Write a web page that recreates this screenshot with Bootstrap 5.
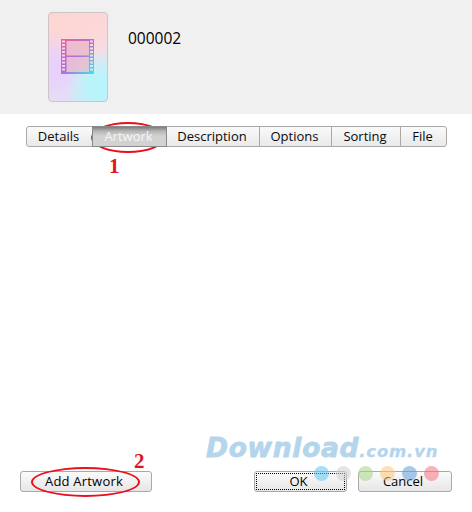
<!DOCTYPE html>
<html lang="en">
<head>
  <meta charset="UTF-8" />
  <meta name="viewport" content="width=device-width, initial-scale=1" />
  <title>Artwork</title>
  <link href="https://cdn.jsdelivr.net/npm/bootstrap@5.3.2/dist/css/bootstrap.min.css" rel="stylesheet">
  <style>
    html, body { height: 100%; overflow: hidden; }
    body {
      font-family: "Open Sans", "Liberation Sans", sans-serif;
      background: #fff;
      color: #000;
    }
    .app-page { height: 512px; width: 472px; position: relative; }
    .info-head {
      height: 114px;
      background: #f0f0f0;
      padding: 12px 0 0 48px;
      gap: 20px;
    }
    .thumb {
      width: 60px;
      height: 90px;
      border: 1px solid #cdc4c8;
      border-radius: 4px;
      background:
        radial-gradient(circle 36px at 90% 85%, #b6f6fb 0, rgba(182,246,251,.85) 40%, rgba(182,246,251,0) 100%),
        radial-gradient(circle 38px at 5% 65%, #e6d0fe 0, rgba(230,208,254,.8) 45%, rgba(230,208,254,0) 100%),
        linear-gradient(150deg, #fdd6ce 0, #fcd8dc 45%, #e6e6ee 68%, #d9dcfa 100%);
    }
    .clip-name { font-size: 15.5px; line-height: 20px; padding-top: 16px; }
    .tab-strip { margin: 12px 25px 0 26px; display: flex; height: 21px; }
    .tab-strip .btn {
      --bs-btn-border-radius: 3px;
      flex: none;
      padding: 0 2px 0 0;
      height: 21px;
      font-size: 13px;
      line-height: 19px;
      color: #0a0a0a;
      border: 1px solid #a9a9a9;
      background: linear-gradient(#fafafa, #e9e9e9);
    }
    .tab-strip .btn + .btn { margin-left: -1px; }
    .tab-strip .btn.active {
      color: #f6f6f6;
      background: linear-gradient(#7d7d7d 0, #b5b5b5 4px, #d2d2d2 9px, #d2d2d2 100%);
      border-color: #8a8a8a;
    }
    .w-details { width: 67px; }
    .w-artwork { width: 75px; }
    .w-description { width: 94px; }
    .w-options { width: 73px; }
    .w-sorting { width: 70px; }
    .w-file { width: 47px; }
    .foot-row { padding: 0 20px 20px 20px; }
    .foot-btn {
      --bs-btn-border-radius: 3px;
      height: 21px;
      padding: 0 4px 0 0;
      font-size: 13px;
      line-height: 19px;
      color: #000;
      border: 1px solid #a9a9a9;
      background: linear-gradient(#fbfbfb, #e6e6e6);
    }
    .add-btn { width: 132px; letter-spacing: .2px; }
    .ok-btn { width: 93px; position: relative; }
    .ok-btn::after {
      content: "";
      position: absolute;
      inset: 1px;
      border: 1px dotted #000;
    }
    .cancel-btn { width: 94px; margin-left: 11px; }
    .mark-oval {
      position: absolute;
      border: 2.5px solid #e8101c;
      border-radius: 50%;
      pointer-events: none;
    }
    .oval-one { left: 91px; top: 122px; width: 74px; height: 31px; }
    .oval-two { left: 31px; top: 467px; width: 109px; height: 30px; }
    .mark-num {
      position: absolute;
      font-family: "Liberation Serif", serif;
      font-weight: 700;
      font-size: 21px;
      line-height: 24px;
      color: #e0141e;
    }
    .num-one { left: 109px; top: 154px; }
    .num-two { left: 134px; top: 449px; }
    .wm-text {
      position: absolute;
      left: 206px;
      top: 432px;
      font-family: "DejaVu Sans", sans-serif;
      font-weight: 700;
      font-style: italic;
      color: #b4d5ec;
      -webkit-text-stroke: .8px #b4d5ec;
      font-size: 26.5px;
      line-height: 32px;
      letter-spacing: .7px;
      white-space: nowrap;
    }
    .wm-text span { font-size: 16.5px; letter-spacing: .8px; -webkit-text-stroke: .3px #b4d5ec; }
    .wm-dots { position: absolute; left: 314px; top: 466px; gap: 7px; }
    .wm-dots i { display: block; width: 15px; height: 15px; border-radius: 50%; opacity: .55; }
  </style>
</head>
<body>
<div class="app-page d-flex flex-column">
  <div class="info-head d-flex">
    <div class="thumb d-flex align-items-center justify-content-center">
      <svg width="34" height="36" viewBox="0 0 34 36">
        <defs>
          <linearGradient id="filmGrad" x1="0" y1="0" x2="1" y2="1">
            <stop offset="0" stop-color="#f4608f"/>
            <stop offset=".5" stop-color="#b070d8"/>
            <stop offset="1" stop-color="#3fe4ee"/>
          </linearGradient>
        </defs>
        <rect x="5" y="1" width="23" height="34" fill="#e2a9c0" opacity=".55"/>
        <path fill="url(#filmGrad)" fill-rule="evenodd" d="M0 0H33V35H0ZM1 1.500V3.500H4V1.500ZM1 5V7H4V5ZM1 8.500V10.500H4V8.500ZM1 12V14H4V12ZM1 15.500V17.500H4V15.500ZM1 19V21H4V19ZM1 22.500V24.500H4V22.500ZM1 26V28H4V26ZM1 29.500V31.500H4V29.500ZM29 1.500V3.500H32V1.500ZM29 5V7H32V5ZM29 8.500V10.500H32V8.500ZM29 12V14H32V12ZM29 15.500V17.500H32V15.500ZM29 19V21H32V19ZM29 22.500V24.500H32V22.500ZM29 26V28H32V26ZM29 29.500V31.500H32V29.500ZM5.500 2V16.500H28V2ZM5.500 18V33H28V18Z"/>
      </svg>
    </div>
    <div class="clip-name">000002</div>
  </div>

  <div class="tab-strip btn-group" role="group">
    <button type="button" class="btn w-details">Details</button>
    <button type="button" class="btn w-artwork active">Artwork</button>
    <button type="button" class="btn w-description">Description</button>
    <button type="button" class="btn w-options">Options</button>
    <button type="button" class="btn w-sorting">Sorting</button>
    <button type="button" class="btn w-file">File</button>
  </div>

  <div class="flex-grow-1"></div>

  <div class="foot-row d-flex">
    <button type="button" class="btn foot-btn add-btn">Add Artwork</button>
    <button type="button" class="btn foot-btn ok-btn ms-auto">OK</button>
    <button type="button" class="btn foot-btn cancel-btn">Cancel</button>
  </div>

  <div class="wm-text">Download<span>.com.vn</span></div>
  <div class="wm-dots d-flex">
    <i style="background:#5cc4f2"></i>
    <i style="background:#cfcfcf"></i>
    <i style="background:#a6d486"></i>
    <i style="background:#fbc77c"></i>
    <i style="background:#5f9fd8"></i>
    <i style="background:#f2727e"></i>
  </div>

  <div class="mark-oval oval-one"></div>
  <div class="mark-num num-one">1</div>
  <div class="mark-oval oval-two"></div>
  <div class="mark-num num-two">2</div>
</div>
<script src="https://cdn.jsdelivr.net/npm/bootstrap@5.3.2/dist/js/bootstrap.bundle.min.js"></script>
</body>
</html>
